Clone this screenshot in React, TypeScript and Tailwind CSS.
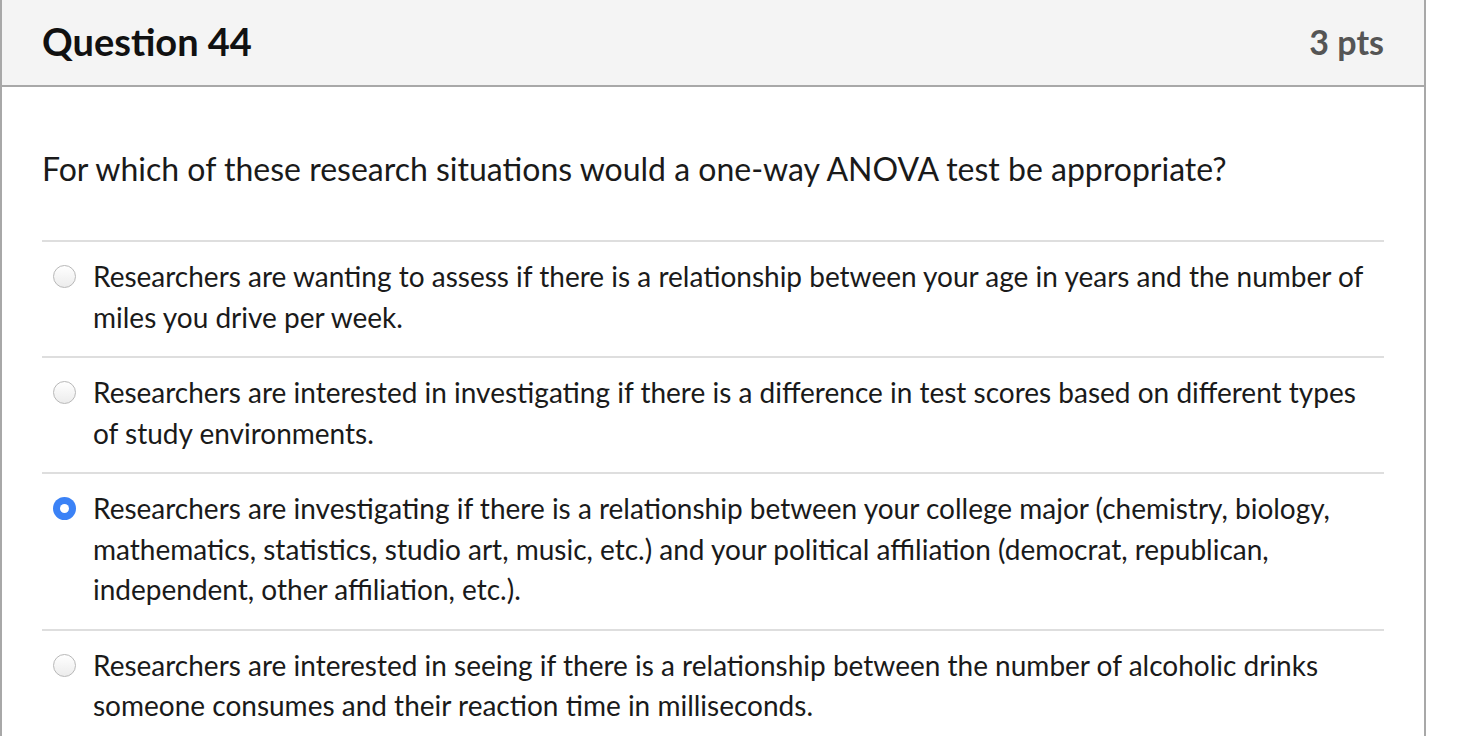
import React from "react";

const answers: { text: string; checked?: boolean }[] = [
  {
    text: "Researchers are wanting to assess if there is a relationship between your age in years and the number of miles you drive per week.",
  },
  {
    text: "Researchers are interested in investigating if there is a difference in test scores based on different types of study environments.",
  },
  {
    text: "Researchers are investigating if there is a relationship between your college major (chemistry, biology, mathematics, statistics, studio art, music, etc.) and your political affiliation (democrat, republican, independent, other affiliation, etc.).",
    checked: true,
  },
  {
    text: "Researchers are interested in seeing if there is a relationship between the number of alcoholic drinks someone consumes and their reaction time in milliseconds.",
  },
];

function Radio({ checked }: { checked?: boolean }) {
  if (checked) {
    return (
      <span className="mt-[9px] flex h-[23px] w-[23px] shrink-0 items-center justify-center rounded-full bg-[#3b82f6]">
        <span className="h-[9px] w-[9px] rounded-full bg-white" />
      </span>
    );
  }
  return (
    <span className="mt-[9px] h-[23px] w-[23px] shrink-0 rounded-full border border-[#b8b8b8] bg-gradient-to-b from-white to-[#ececec]" />
  );
}

export default function App() {
  return (
    <div
      className="h-[736px] w-[1468px] overflow-hidden bg-white"
      style={{ fontFamily: "Lato, 'Noto Sans', sans-serif" }}
    >
      <div className="h-full w-[1426px] border-x-2 border-[#a8a8a8]">
        <div className="flex h-[87px] items-center justify-between border-b-2 border-[#a8a8a8] bg-[#f4f4f4] pl-[40px] pr-[40px]">
          <span className="mb-[2px] text-[38px] font-bold text-[#111]">Question 44</span>
          <span className="mb-[2px] text-[34px] font-bold text-[#555]">3 pts</span>
        </div>
        <div className="px-[40px]">
          <p className="pt-[62px] pb-[51px] text-[32px] leading-[40px] text-[#1a1a1a]">
            For which of these research situations would a one-way ANOVA test be appropriate?
          </p>
          {answers.map((a, i) => (
            <div key={i} className="flex gap-[17px] border-t-2 border-[#dedede] pb-[19px] pt-[14px] pl-[11px]">
              <Radio checked={a.checked} />
              <span className="text-[28px] leading-[40.5px] text-[#1a1a1a]">{a.text}</span>
            </div>
          ))}
        </div>
      </div>
    </div>
  );
}
